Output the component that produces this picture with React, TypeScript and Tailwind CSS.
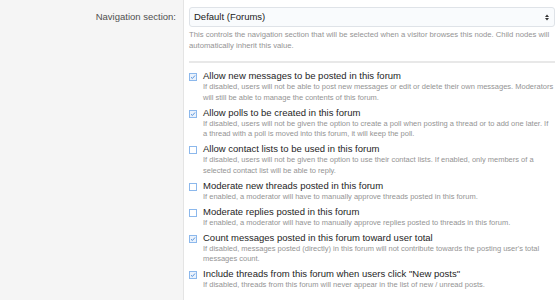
import React from "react";

type Opt = { label: string; hint: string[]; checked: boolean };

const options: Opt[] = [
  {
    label: "Allow new messages to be posted in this forum",
    hint: [
      "If disabled, users will not be able to post new messages or edit or delete their own messages. Moderators",
      "will still be able to manage the contents of this forum.",
    ],
    checked: true,
  },
  {
    label: "Allow polls to be created in this forum",
    hint: [
      "If disabled, users will not be given the option to create a poll when posting a thread or to add one later. If",
      "a thread with a poll is moved into this forum, it will keep the poll.",
    ],
    checked: true,
  },
  {
    label: "Allow contact lists to be used in this forum",
    hint: [
      "If disabled, users will not be given the option to use their contact lists. If enabled, only members of a",
      "selected contact list will be able to reply.",
    ],
    checked: false,
  },
  {
    label: "Moderate new threads posted in this forum",
    hint: ["If enabled, a moderator will have to manually approve threads posted in this forum."],
    checked: false,
  },
  {
    label: "Moderate replies posted in this forum",
    hint: ["If enabled, a moderator will have to manually approve replies posted to threads in this forum."],
    checked: false,
  },
  {
    label: "Count messages posted in this forum toward user total",
    hint: [
      "If disabled, messages posted (directly) in this forum will not contribute towards the posting user's total",
      "messages count.",
    ],
    checked: true,
  },
  {
    label: 'Include threads from this forum when users click "New posts"',
    hint: ["If disabled, threads from this forum will never appear in the list of new / unread posts."],
    checked: true,
  },
];

function Box({ checked }: { checked: boolean }) {
  return (
    <span
      className={
        checked
          ? "mt-[3px] w-[8px] h-[8px] shrink-0 border border-[#8cb8ec] bg-[#eaf2fc] flex items-center justify-center"
          : "mt-[3px] w-[8px] h-[8px] shrink-0 border border-[#8cb8ec] bg-white"
      }
    >
      {checked && (
        <svg width="6" height="6" viewBox="0 0 6 6">
          <path d="M1 3.2 L2.4 4.5 L5 1.5" fill="none" stroke="#5a95dc" strokeWidth="1" />
        </svg>
      )}
    </span>
  );
}

export default function App() {
  return (
    <div
      className="w-[558px] h-[300px] overflow-hidden bg-white flex flex-col"
      style={{ fontFamily: '"Liberation Sans", Arial, sans-serif' }}
    >
      {/* navigation section row */}
      <div className="flex">
        <div className="w-[184px] shrink-0 bg-[#f5f5f5] border-r border-[#e4e4e4] pr-[7px] pt-[11px] text-right text-[9.5px] leading-[12px] text-[#505050]">
          Navigation section:
        </div>
        <div className="flex-1 pl-[5px] pr-[3px] pt-[7px]">
          <div className="h-[20px] border border-[#dfe3e8] rounded-[3px] bg-[#f9fbfd] flex items-center justify-between pl-[4px] pr-[5px] text-[9.5px] text-[#222]">
            <span>Default (Forums)</span>
            <svg width="4" height="7" viewBox="0 0 4 7">
              <path d="M0 3 L2 0.5 L4 3 Z M0 4 L2 6.5 L4 4 Z" fill="#333" />
            </svg>
          </div>
          <div className="pt-[3px] pb-[10px] text-[7.7px] leading-[10.5px] text-[#949494] border-b-2 border-[#e8e8e8]">
            <div>This controls the navigation section that will be selected when a visitor browses this node. Child nodes will</div>
            <div>automatically inherit this value.</div>
          </div>
        </div>
      </div>

      {/* options row */}
      <div className="flex flex-1">
        <div className="w-[184px] shrink-0 bg-[#f5f5f5] border-r border-[#e4e4e4]" />
        <div className="flex-1 pl-[5px] pt-[7px] flex flex-col gap-[3.5px]">
          {options.map((o) => (
            <div key={o.label} className="flex gap-[6px]">
              <Box checked={o.checked} />
              <div>
                <div className="text-[9.5px] leading-[12px] text-[#1e1e1e]">{o.label}</div>
                {o.hint.map((h) => (
                  <div key={h} className="text-[7.5px] leading-[10.5px] text-[#949494] whitespace-nowrap">
                    {h}
                  </div>
                ))}
              </div>
            </div>
          ))}
        </div>
      </div>
    </div>
  );
}
